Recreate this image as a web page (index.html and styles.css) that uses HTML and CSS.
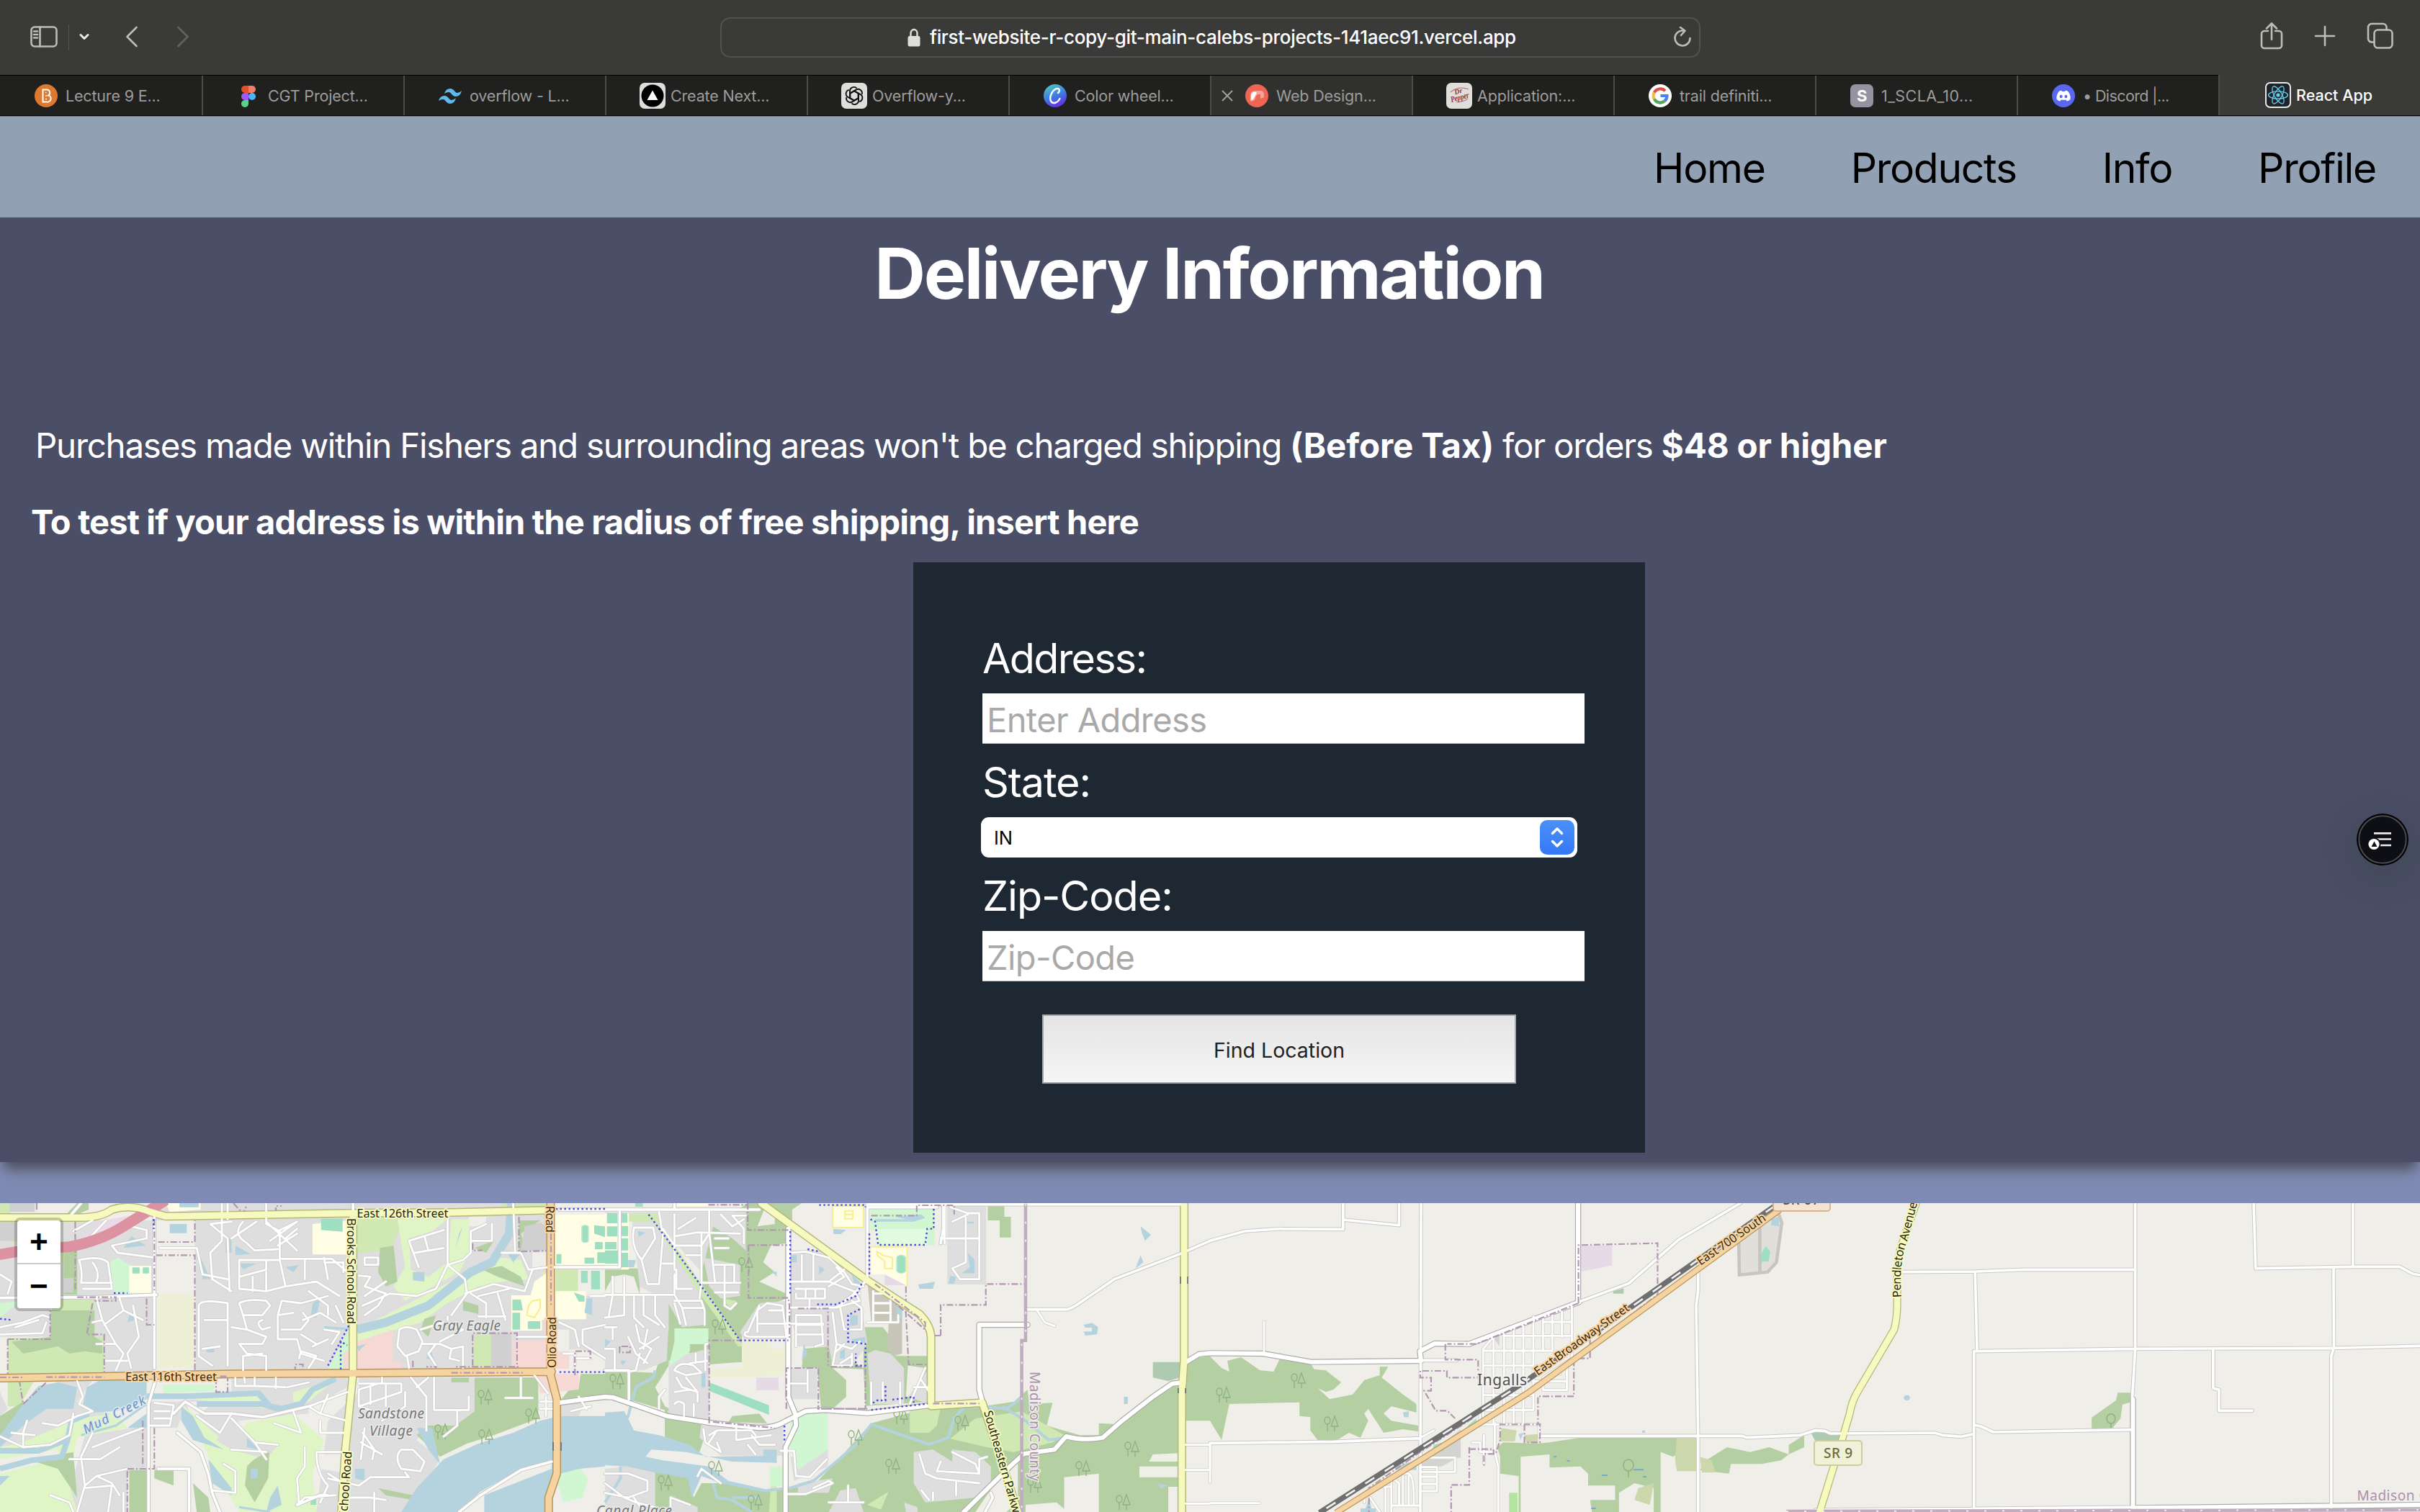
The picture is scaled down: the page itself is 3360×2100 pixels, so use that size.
FILE: index.html
```html
<!DOCTYPE html>
<html lang="en">
<head>
<meta charset="utf-8">
<title>React App</title>
<link rel="stylesheet" href="styles.css">
</head>
<body>
<header class="browser">
  <div class="toolbar">
    <div class="toolbar-left">
      <svg class="ico-sidebar" viewBox="0 0 38 30"><rect x="1.5" y="1.5" width="35" height="27" rx="4.5"/><path d="M13.5 1.5V28.5M5 7.500H10M5 12H10M5 16.500H10"/></svg>
      <span class="tool-sep"></span>
      <svg class="ico-down" viewBox="0 0 14 10"><path d="M2 2.500L7 7.500L12 2.500"/></svg>
      <svg class="ico-back" viewBox="0 0 18 30"><path d="M15.500 2L2.500 15L15.500 28"/></svg>
      <svg class="ico-fwd" viewBox="0 0 18 30"><path d="M2.500 2L15.500 15L2.500 28"/></svg>
    </div>
    <div class="address-bar">
      <div class="address">
        <svg class="ico-lock" viewBox="0 0 18 26"><path d="M4.500 12V7.500a4.500 5.500 0 0 1 9 0V12" fill="none" stroke="#dededc" stroke-width="2.400"/><rect x="0.500" y="11" width="17" height="14.500" rx="2.500" fill="#dededc"/></svg>
        <span>first-website-r-copy-git-main-calebs-projects-141aec91.vercel.app</span>
      </div>
      <svg class="ico-reload" viewBox="0 0 26 30"><path d="M14 5.500A10.500 10.500 0 1 0 23.500 16M10 1L16.500 5.700L11 12"/></svg>
    </div>
    <div class="toolbar-right">
      <svg width="32" height="40" viewBox="0 0 32 40"><path d="M11 13H6a4 4 0 0 0-4 4V33a4 4 0 0 0 4 4H26a4 4 0 0 0 4-4V17a4 4 0 0 0-4-4H21M16 25V3M9 9.500L16 2.500L23 9.500"/></svg>
      <svg width="30" height="30" viewBox="0 0 30 30"><path d="M15 2V28M2 15H28"/></svg>
      <svg width="38" height="38" viewBox="0 0 38 38"><rect x="10.500" y="10.500" width="25" height="25" rx="5"/><path d="M10.500 27.500H7a5 5 0 0 1-5-5V7a5 5 0 0 1 5-5H22.500a5 5 0 0 1 5 5V10.500"/></svg>
    </div>
  </div>
  <nav class="tabs">
    <div class="tab"><svg class="fav" viewBox="0 0 32 32"><circle cx="16" cy="16" r="16" fill="#dd7a30"/><path d="M11.500 7.500H16.500a4.300 4.300 0 0 1 2.600 8a4.500 4.500 0 0 1-2.200 9H11.500Z" fill="none" stroke="#fff" stroke-width="2"/><path d="M15 11.500H16.500M15 16H17M15 20.500H17" stroke="#fff" stroke-width="1.600"/></svg><span>Lecture 9 E...</span></div>
    <div class="tab"><svg class="fav" viewBox="0 0 32 32"><path d="M11 2H16V12H11a5 5 0 0 1 0-10Z" fill="#e5502a"/><path d="M16 2H21a5 5 0 0 1 0 10H16Z" fill="#f27b69"/><path d="M16 12V22H11a5 5 0 0 1 0-10Z" fill="#9b59f5"/><circle cx="21" cy="17" r="5" fill="#4eb4f5"/><path d="M11 22H16V27a5 5 0 1 1-5-5Z" fill="#5bd08a"/></svg><span>CGT Project...</span></div>
    <div class="tab"><svg class="fav" viewBox="0 0 32 32"><path d="M8 13Q10 6 16 6C22 6 22 12 26 12Q29 12 32 9Q30 17 24 17C18 17 18 11 14 11Q11 11 8 13ZM0 23Q2 16 8 16C14 16 14 22 18 22Q21 22 24 19Q22 27 16 27C10 27 10 21 6 21Q3 21 0 23Z" fill="#5cb9ee"/></svg><span>overflow - L...</span></div>
    <div class="tab"><svg class="fav-lg" viewBox="0 0 36 36"><rect width="36" height="36" rx="7" fill="#dededc"/><circle cx="18" cy="18" r="15.500" fill="#000"/><path d="M18 10.500L25.500 24H10.500Z" fill="#fff"/></svg><span>Create Next...</span></div>
    <div class="tab"><svg class="fav-lg" viewBox="0 0 36 36"><rect width="36" height="36" rx="7" fill="#dededc"/><g transform="translate(18 18)" fill="none" stroke="#111" stroke-width="1.900"><path id="petal" d="M-1.500 5.500L-6 3V-6.500a5.500 5.500 0 0 1 9.500-3.800M-6 3L1 7"/><use href="#petal" transform="rotate(60)"/><use href="#petal" transform="rotate(120)"/><use href="#petal" transform="rotate(180)"/><use href="#petal" transform="rotate(240)"/><use href="#petal" transform="rotate(300)"/></g></svg><span>Overflow-y...</span></div>
    <div class="tab"><svg class="fav" viewBox="0 0 32 32"><defs><linearGradient id="cv" x1="0.300" y1="0" x2="0.700" y2="1"><stop offset="0" stop-color="#4fc3c5"/><stop offset="0.500" stop-color="#3f7be0"/><stop offset="1" stop-color="#6a27e0"/></linearGradient></defs><circle cx="16" cy="16" r="16" fill="url(#cv)"/><path d="M20 12Q23 9.500 21.500 7Q18.500 4 13 9.500Q8 16.500 9.500 22Q11.500 27.500 17 25.500Q20.500 24 22.500 20" fill="none" stroke="#fff" stroke-width="2.400" stroke-linecap="round"/></svg><span>Color wheel...</span></div>
    <div class="tab hovered"><svg class="close" viewBox="0 0 16 16"><path d="M1 1L15 15M15 1L1 15"/></svg><svg class="fav" viewBox="0 0 32 32"><circle cx="16" cy="16" r="16" fill="#ee6553"/><path d="M7 24V15Q7 9 14 9H21Q27 9 26 18L21 20V15Q21 13 17 14.500Q14 16 13.500 21Q11 24 7 24Z" fill="#fff" fill-opacity="0.400"/><path d="M8 22V16Q8 10.500 14 10.500L16 12L11 21Z" fill="#fff"/></svg><span>Web Design...</span></div>
    <div class="tab"><svg class="fav-lg" viewBox="0 0 36 36"><rect width="36" height="36" rx="7" fill="#dededc"/><path d="M6 13Q17 4 31 9M30 22Q23 27 14 27" fill="none" stroke="#b47a80" stroke-width="1.200"/><g transform="rotate(-16 18 18)" fill="#9a3340" font-family="Liberation Serif, serif" font-style="italic" font-weight="700"><text x="13" y="15" font-size="10">Dr</text><text x="5" y="24" font-size="11.500" textLength="26" lengthAdjust="spacingAndGlyphs">Pepper</text></g></svg><span>Application:...</span></div>
    <div class="tab"><svg class="fav" viewBox="0 0 32 32"><circle cx="16" cy="16" r="16" fill="#fff"/><g fill="none" stroke-width="4.200"><path d="M23 9.200A9.500 9.500 0 0 0 7.800 11.500" stroke="#de4f43"/><path d="M7.800 11.500A9.500 9.500 0 0 0 7.800 20.500" stroke="#f2bc42"/><path d="M7.800 20.500A9.500 9.500 0 0 0 22.400 23.200" stroke="#55a65c"/><path d="M22.400 23.200Q25.500 20.500 25.500 16H16.500" stroke="#4a81ec"/></g></svg><span>trail definiti...</span></div>
    <div class="tab"><svg class="fav" viewBox="0 0 32 32"><rect width="32" height="32" rx="7" fill="#9494a0"/><text x="16" y="24" text-anchor="middle" font-family="Inter, sans-serif" font-weight="700" font-size="22" fill="#fff">S</text></svg><span class="wide">1_SCLA_10...</span></div>
    <div class="tab"><svg class="fav" viewBox="0 0 32 32"><circle cx="16" cy="16" r="16" fill="#5a67f0"/><path d="M9.500 10Q12 8.600 13.500 8.800L14 10H18L18.500 8.800Q20 8.600 22.500 10Q26.500 16 25.500 21Q22.500 23.500 20.500 23.500L19.500 21.700H12.500L11.500 23.500Q9.500 23.500 6.500 21Q5.500 16 9.500 10Z" fill="#fff"/><ellipse cx="12.600" cy="17" rx="2" ry="2.300" fill="#5a67f0"/><ellipse cx="19.400" cy="17" rx="2" ry="2.300" fill="#5a67f0"/></svg><span class="tight">• Discord |...</span></div>
    <div class="tab current"><svg class="fav-lg" viewBox="0 0 36 36"><rect x="1" y="1" width="34" height="34" rx="6" fill="#20232a" stroke="#e8e8e6" stroke-width="2"/><g fill="none" stroke="#66cfee" stroke-width="1.300"><ellipse cx="18" cy="18" rx="13.500" ry="5.200"/><ellipse cx="18" cy="18" rx="13.500" ry="5.200" transform="rotate(60 18 18)"/><ellipse cx="18" cy="18" rx="13.500" ry="5.200" transform="rotate(120 18 18)"/></g><circle cx="18" cy="18" r="2.600" fill="#66cfee"/></svg><span>React App</span></div>
  </nav>
</header>

<nav class="site-nav"><a>Home</a><a>Products</a><a>Info</a><a>Profile</a></nav>

<main class="delivery">
  <h1>Delivery Information</h1>
  <p class="policy">Purchases made within Fishers and surrounding areas won't be charged shipping <b>(Before Tax)</b> for orders <b>$48 or higher</b></p>
  <p class="prompt">To test if your address is within the radius of free shipping, insert here</p>
  <form class="lookup">
    <label class="address-label">Address:</label>
    <input type="text" placeholder="Enter Address">
    <label>State:</label>
    <div class="select"><span>IN</span><svg viewBox="0 0 48 48"><defs><linearGradient id="sel" x1="0" y1="0" x2="0" y2="1"><stop offset="0" stop-color="#4a90f8"/><stop offset="1" stop-color="#3478f6"/></linearGradient></defs><rect width="48" height="48" rx="10" fill="url(#sel)"/><path d="M17.500 18.500L24 12L30.500 18.500M17.500 29.500L24 36L30.500 29.500" fill="none" stroke="#fff" stroke-width="3.400" stroke-linecap="round" stroke-linejoin="round"/></svg></div>
    <label>Zip-Code:</label>
    <input type="text" placeholder="Zip-Code">
    <button type="button">Find Location</button>
  </form>
</main>

<section class="map">
<svg class="tiles" width="3360" height="429" viewBox="0 0 3360 429">
<defs>
<g id="trees" fill="none" stroke="#8fb080" stroke-width="1.300"><ellipse cx="-5" cy="-5" rx="4" ry="5"/><path d="M-5 0V10M5 -11L0 3H10ZM5 3V10"/></g>

<!-- residential streets -->
<g id="res0" transform="translate(0 -91) scale(0.535714 0.333333)">
<path d="M240 345L190 390M275 345L225 430M340 370L380 385V420L290 450L305 480L400 500M205 510Q215 560 210 605H290M205 510Q260 490 280 520L290 630H215M240 520Q260 560 250 600M0 570L30 600L20 650M0 790L60 770L110 740L130 750M0 820L110 815L120 770M40 790L100 760"/>
<path d="M250 670L265 760L240 770M265 760L300 860L320 900L300 970M310 670L320 720L370 760M345 700L360 830L330 900L340 960M270 930H330M250 860L300 860M320 720L270 780"/>
<path d="M575 273V430L545 480L550 590L600 640M590 273V340M600 350L545 360L590 420L595 640M415 460H510L525 570L590 590M515 700Q520 670 590 690V950M515 700V910L550 950M525 880L570 870M530 760H590"/>
<path d="M630 350Q600 400 640 440L660 470L720 465M665 350L600 420M690 350L770 470M720 390L770 350L700 430M770 400L720 450M740 420L770 380M690 273V360L725 390V505H860L900 560M725 490M620 510V630L690 640L740 620M620 510H725M690 510V550L620 580M725 510L740 620L820 600L880 660M790 510V590M840 500L850 590M655 580V640M690 560V640M840 520H890V560"/>
<path d="M620 690Q640 670 690 680L700 700L680 740L630 740ZM630 740L640 800L600 790M680 760Q660 770 680 800L700 790M640 800L690 830L680 860H620L640 900L690 910V970M720 840V740L730 680L780 690L850 660M720 740L760 730M720 840H770L780 900L840 930M630 970V910L680 900M785 760L830 730L870 770M785 730L800 760L780 800H730M870 700L890 770M800 640L850 700V740M820 860L780 820M850 840L810 870M840 800L880 810L860 860M775 920L780 890L820 910L800 960"/>
<path d="M630 970L635 1020M660 1000V1035L740 1040M715 1000V1045M610 1000V1035H660M745 1040L800 1020M945 500H980V530H945ZM930 575L960 580L945 620L1000 650L980 700L945 740M945 660L1000 600M940 700L1010 650L1080 660L1130 630L1160 530L1200 510L1220 480V390L1260 360M1160 340V530L1205 590L1210 650L1170 740M1060 430L1150 385M1060 430L1085 540M1075 480L1150 460M1100 410L1110 470M1220 430L1275 430V360M1205 650L1280 610L1360 640L1380 550M1220 650L1260 690V750M1290 650L1310 760M1330 273L1335 475M1300 480H1350L1370 550L1420 540M1240 660L1320 630M1240 745H1310"/>
<path d="M1035 800Q1050 780 1080 800L1095 850L1085 890L1050 910L1030 870ZM1055 910L1060 960M1095 860H1140L1170 880L1200 870V960M1130 860L1110 900L1130 950M1090 800L1150 770L1200 800L1140 850M1170 880L1165 920L1190 930M1160 760V745"/>
<path d="M990 1000V1020L930 1050V1120M930 1025H1040V1060L930 1120M1050 1060V1120L990 1180M1065 1000L1105 1080V1220M1125 1000V1135H1215V1080M1185 1140V1200L1150 1245M930 1120L1010 1160M960 1040V1110M1000 1030V1120M1080 1040L1110 1000M1350 1000V1080M1310 1085H1380M945 1210L935 1340M935 1270L990 1320M940 1230L970 1300L965 1340M1040 1300Q1020 1330 1040 1380L1090 1390L1100 1350L1070 1300ZM1050 1395L1060 1415H960L930 1450L850 1420M900 1500H960L1000 1510M970 1480V1560M1385 990L1420 1065M1400 1100H1430M1400 1130H1430M1415 1080V1160"/>
<path d="M1450 770L1490 800L1500 870M1568 780L1510 800V860L1568 920M1530 660H1568M1460 900H1490V950M1490 920H1530M1340 830H1420M1530 1120L1480 1140M1500 1080L1520 1130"/>
<path d="M600 1150L570 1230L510 1160M600 1170L660 1270L720 1280M600 1300L690 1310M660 1270L690 1340M800 1120L830 1150L900 1180M850 1070L830 1150M900 1060L800 1120M760 1140L780 1230L710 1190M830 1180V1230H900M820 1310H890M820 1310Q820 1400 850 1450L830 1520M790 1290V1370L770 1420L775 1530M870 1490L790 1500L770 1530M850 1400L890 1440M580 1360L610 1390V1480L550 1470"/>
<path d="M200 1015L215 1080L205 1110L240 1140L200 1160L150 1200L110 1190M0 1245L60 1290L130 1280L180 1240L190 1150M70 1180L60 1230V1290M30 1230L90 1240M400 1105L450 1115L440 1200H390M400 1140H440M400 1170H440M240 1230L210 1330L220 1450L200 1560M240 1290L320 1240L370 1210M180 1340L260 1340L310 1290M220 1450L250 1410L290 1440L310 1490M250 1410L330 1380M320 1480V1560M220 1460L290 1450L280 1560M130 1490L180 1520L190 1560"/>
</g>
<g id="res1" transform="translate(840 -91) scale(0.535714 0.333333)">
<path d="M75 375H125L130 420L95 510L110 610H140L150 410L140 310M75 375Q65 450 95 510M190 380L235 335M180 320V550H185V630H225M150 380L180 450H250L270 400M185 410L240 395L350 400M270 300V395L285 600M250 400V600L245 670M285 420H320M285 460H320M285 530H335V600M255 605H350M285 645H345M310 530V700L325 715L340 690M210 490H245M300 320L330 370L360 340M365 325H330L360 380V440M150 525H180"/>
<path d="M0 655H180M20 580V655L10 740M50 580V740L0 750M75 655V750L100 790M100 660V740L140 780M130 655V740L155 790M180 570V655L200 710H255M180 680H250L258 720V780M200 710L210 780M180 690L195 775M0 790H30M20 790V840M80 780L90 850L120 880L100 940M110 800L100 880M140 830L90 880M60 830L80 900L110 940M0 880H25V970M60 975L80 970L90 900"/>
<path d="M180 970Q190 930 230 950L250 980L210 990ZM265 930L220 940M235 900V940M185 1000L200 1040L240 1060M240 1100V1060L210 1000M180 1060L220 1050M180 1110Q190 1090 205 1110V1160M155 1050L140 1080V1130M270 860H260V970M230 1110V1160M365 810Q355 830 380 830H470M395 810V720L420 690L460 700M395 775H565M460 700L470 830M425 720H460M370 810L400 700M495 740H560L565 860L545 870M495 780H565M495 820H565M495 740V870"/>
<path d="M480 480L520 475L580 500L620 560L640 610L670 620M480 600H580L620 550M510 490V600M540 490V600M580 600L660 650M495 630H570V670H495M495 650V670M520 630V670M545 630V670M530 670V705M480 708H600L660 680L650 650L620 680M600 540L620 580L580 620M610 710L620 800H665V710L640 680M590 730L600 860L640 880L660 850M600 860L590 950H640V900M600 890L620 860M610 940L640 910M525 970V1060M470 1025H520M680 770H760V740M695 650H740V770M695 690H740M695 730H740M695 640V770M690 1020V1110M765 1020V1110M720 1020V1100M830 960L800 1070L790 1110M800 1040H840M820 1010L840 1060M540 600V540"/>
<path d="M255 1215L260 1270L300 1310M340 1200V1260L430 1240M290 1220H380L390 1240M270 1240L290 1220L270 1270M380 1240L400 1280H440M370 1280L390 1320M300 1310L290 1270M455 1305H490L495 1410L530 1415L575 1340M470 1485H520L590 1440L580 1430L540 1460M895 290L940 315H970V590H920L900 545L935 520V330M900 350L940 320M870 420H970M935 385V520M0 1400H60L110 1430V1470L60 1500L0 1480M75 1500L100 1560M0 1440L50 1500L80 1520L130 1540M170 1560V1500L220 1530"/>
<path d="M815 1320L830 1400L860 1420L970 1440M900 1310L960 1360L970 1400L860 1390L870 1350M970 1400V1340L990 1330M910 1435V1490M820 1470L840 1510M850 1480V1510M630 1450V1520M580 1520H670M240 1410L250 1380L300 1440M880 440V273M1120 720L1140 770L1165 785M1505 1280H1568V1385H1505M1505 1525H1568"/>
</g>
<g id="res2" transform="translate(1680 -91) scale(0.535714 0.333333)">
<path d="M708 880V1190M735 820V1190M762 800V1190M787 790V1190M812 770V1190M838 745V1130M863 740V890M887 730V890M912 715V830M938 690V940M863 768H938M760 826H938M708 888H887M708 950H838M708 1012H838M708 1073H838M708 1135H838M700 1195H855M708 880L740 820M938 920L863 1000V1052H925V935M838 1015H925M900 960L908 985M738 1190L738 1310L747 1370V1560M700 1195V1130M853 1195V1245M680 1270H700V1310H740M710 1240V1360M545 1333H635V1393H545M545 1373H588V1473H545M545 1413H588M545 1443H588M400 1520Q400 1460 430 1455M415 1500L440 1560M470 1430Q490 1395 515 1400Q530 1410 528 1530M470 1430V1560M455 1400L490 1440V1530M500 1410V1530M515 1410V1530M470 1533H540M430 1455H470M455 1455V1560M140 768V890M0 1523H128M0 1272V1435M545 1250L580 1220"/>
</g>

<!-- unclassified country roads -->
<g id="min0" transform="translate(0 -91) scale(0.535714 0.333333)">
<path d="M0 668L250 665L405 655M400 330V960M405 1000L385 1110V1560M210 273L180 330M915 273V335M1430 540H1568M1450 300H1568M480 1100L450 1150M480 1100L530 1150L600 1150L680 1165L800 1120M460 1230L520 1310L540 1400L550 1480L570 1560M770 1530L830 1490H850M410 1380H490V1560M1430 1350L1350 1385L1245 1490L1190 1560"/>
</g>
<g id="min1" transform="translate(840 -91) scale(0.535714 0.333333)">
<path d="M0 970H62V1090M180 273V295M38 310V540H0M680 273V590L640 660L600 708M685 290H860M877 273V380L870 440M1095 716H1198Q1210 710 1220 700L1320 590L1490 485L1568 430M985 1560L1005 1500L1000 1480M0 300H400M685 278H1500"/>
</g>
<g id="min2" transform="translate(1680 -91) scale(0.535714 0.333333)">
<path d="M0 430L90 390L180 380L345 382V273M345 342L490 365V273M547 273L545 1560M953 273V690M955 685L1085 608L1215 425L1375 273M1265 530V640L1260 700L1265 1240V1560M0 1273L320 1267L545 1253M545 928H640M855 1243H1380L1390 1250L1530 1240L1568 1220"/>
</g>
<g id="min3" transform="translate(2520 -91) scale(0.535714 0.333333)">
<path d="M0 1220L25 1222L40 1233L310 1230L330 1240L380 1246L410 1235M225 560L415 558L540 550H830M415 558L420 890M830 273V880L822 1090M415 890L830 880L1340 877L1568 868M412 890V1550M1137 273L1142 545L1400 538H1515L1550 568L1568 573M1394 273V538M1344 540L1345 875L1338 910V1540M1032 880V1045L1047 1050V1138H1133M412 1197L430 1203L462 1227L822 1217M0 1552L820 1540"/>
</g>

<!-- tertiary roads -->
<g id="ter" transform="translate(840 -91) scale(0.535714 0.333333)">
<path d="M-120 1105L-50 1090L0 1080L20 1082L160 1160L280 1190L400 1210Q440 1210 470 1180L520 1140L570 1135L680 1148L845 1115M475 380V1080L493 1150L495 1200L468 1290V1560M978 1100L970 1050V780H1095M1501 940L1540 902L1568 898L1705 900L1830 935L2115 930L2112 890L2150 858L2240 860L2525 685M1500 1020L1470 1025L1420 1080L1340 1180L1290 1250Q1240 1265 1195 1245L1165 1300L1085 1318L1050 1370L930 1560M2522 273V685M3960 1090V1550M3960 1543L4720 1530"/>
</g>
<!-- secondary roads -->
<g id="sec" transform="translate(0 -91) scale(0.535714 0.333333)">
<path d="M0 333H200Q260 335 290 300Q340 275 390 310L430 328L900 315L1170 312L1430 302M915 315V980L895 1300L885 1560"/>
</g>
<g id="sec1" transform="translate(840 -91) scale(0.535714 0.333333)">
<path d="M405 273L680 595L815 735Q843 780 845 830V1118L978 1105L1010 1260L1070 1560M1501 273V930L1495 1060V1560"/>
</g>
<g id="sec3" transform="translate(2520 -91) scale(0.535714 0.333333)">
<path d="M262 273L220 470L213 560V670Q214 750 205 800L110 1060Q95 1100 90 1150L68 1270L12 1560"/>
</g>
<g id="pri" transform="translate(0 -91) scale(0.535714 0.333333)">
<path d="M0 1002L270 995L600 985L900 982L1430 975M1427 273V990L1443 1090V1400L1422 1500V1560"/>
</g>
</defs>

<rect width="3360" height="429" fill="#f0eee8"/>

<!-- land use, west -->
<g transform="translate(0 -91) scale(0.535714 0.333333)">
<path class="town" d="M0 345H400V830H270L130 700H0ZM405 273H1430V975H600L505 970V345H405ZM0 700H130V830H0ZM245 670H400V980H270V830H245ZM1440 757L1520 757V660H1568V920L1500 880L1440 890ZM600 1000H900V1040L800 1130L600 1110ZM930 1000H1230V1140L1180 1200H1110L1080 1260L1140 1340L1060 1560H820L850 1180L930 1060ZM150 1010H240L200 1100L300 1160L260 1200L130 1250L60 1320L0 1300V1240L110 1120ZM220 1240L385 1200V1400L330 1400V1560H200L180 1480ZM0 1060L20 1130L0 1160ZM390 1100H480L460 1210H390ZM460 1100L540 1080L800 1120V1150L620 1180L580 1290L460 1170ZM1440 1090H1520L1500 1160H1440ZM0 1500L100 1470L130 1560H0Z"/>
<path class="land" d="M410 345H505V435H410ZM405 490H507V970H405ZM95 273H380V310H95ZM1215 330H1260V370H1215ZM1380 478H1420V540L1380 550ZM1445 800H1475V960H1440ZM500 1170L560 1100H480ZM410 1210L460 1210L530 1310L520 1390H420ZM390 1390H500V1560H390ZM830 1320H900V1400L830 1380ZM1190 1560L1245 1480L1350 1380L1430 1340V1360L1350 1400L1250 1490V1560ZM1420 1560V1500L1510 1500L1525 1425L1568 1370V1560Z"/>
<path fill="#edf0d5" d="M410 655H503V957H410Z"/>
<path class="grass" d="M0 273H27V345H0ZM0 430H195V520H60V440ZM135 675H245V830H270V1010H20V835H135ZM925 335H1050L1010 470L925 480ZM1230 820H1273V955H1225ZM1300 1000H1380V1080H1300ZM1440 548H1498V648H1440ZM1300 273H1430V290H1300ZM20 1010H90L50 1120H20Z"/>
<path class="golf" d="M1030 340H1160L1120 390L1060 420L1065 550L1110 580L1160 520L1170 340H1215L1220 470L1190 560L1100 640L1050 680L1020 620L1050 540ZM1240 540L1300 500L1350 510L1370 590L1300 600L1240 620L1150 700L1090 770L925 850V800L1060 690L1180 590ZM470 1110L500 1150L590 1280L640 1190L760 1150L840 1260L810 1400L820 1560H620L560 1400L530 1290ZM60 1270L200 1170L300 1150L330 1210L200 1250L190 1340L180 1450L200 1560H0V1400L150 1340V1300L0 1340V1290ZM450 1080L660 1070L700 1130L600 1110ZM760 1060L870 1010L800 1100L760 1100Z"/>
<path class="town" d="M600 1180L650 1260L720 1280L690 1340L600 1300L560 1260Z"/>
<path class="wood" d="M200 273H230V300L185 330H165ZM165 440L200 430V655H165ZM130 720H245V830L265 850V900L220 890L180 900L150 870L60 900L30 850L130 830ZM985 460L1020 450L1030 600L1000 620L980 560ZM1230 1000H1395V1170L1280 1240L1210 1275L1140 1330L1080 1240L1110 1200H1180L1230 1140ZM1505 985H1568V1080L1450 1100L1480 1040H1500ZM1345 345H1400L1350 400L1365 475H1345ZM1250 550L1300 535L1350 580L1360 620L1290 580ZM1170 1000H1215V1020H1170ZM1200 680L1240 700V735L1200 720ZM640 1370Q660 1330 698 1312L695 1420L660 1520L635 1450ZM980 1460L1070 1490V1510L1000 1490ZM335 1385H390V1560H335ZM400 1385H450V1450L400 1420ZM80 1345L190 1310L200 1500L150 1380ZM500 1440L540 1500L545 1560H510ZM0 1160L60 1100L80 1110L20 1240L0 1250ZM1100 755L1130 740L1110 830L1090 800ZM1230 460L1280 430L1260 480Z"/>
<path class="park" d="M285 520L305 500L340 535V650H295ZM0 690L55 680L0 750ZM420 1030H555V1055L425 1065ZM850 965L905 790V965ZM1440 1410L1500 1370L1524 1420L1510 1500L1460 1520Z"/>
<path class="school" d="M335 535H392V647H335ZM810 360L905 345V487H810ZM1438 320H1568V530H1438ZM1440 640H1518V757H1440ZM1325 657L1375 657L1385 600L1420 560V760H1405V805H1325ZM430 273H520V300L440 310ZM945 892H970V920H945Z"/>
<path class="pitch" d="M343 541H362V566H343ZM370 541H386V566H370ZM832 338H888V392L832 385ZM1506 555H1523V605H1506ZM1532 555H1555V632H1532ZM1328 675L1350 675L1355 720L1328 720ZM1328 730H1348V800H1328ZM1540 365L1568 370V415L1540 400ZM1542 435H1562V465H1542ZM1515 500H1540V525H1515ZM1442 485H1455V525H1442ZM1487 645L1515 660V683H1500ZM1368 765H1400V797H1368ZM1548 478H1568V523H1548ZM805 1500H820V1530H805Z"/>
<rect x="1508" y="365" width="17" height="72" rx="8" class="track"/>
<path class="pink" d="M925 850L1018 800V935H1040V963H890V900ZM1330 845H1410V750H1440V890H1475V963H1330ZM1390 985H1500V1050L1400 1065Z"/>
<path fill="#ead9e8" d="M205 420L270 345L390 310L310 410L240 440Z"/>
<path class="gray" d="M0 345H45V430H0ZM1273 815H1325V955H1273ZM1360 370L1400 355L1430 380V470H1350ZM165 585H190V645H165ZM25 273H90V310H25Z"/>
<path class="water" d="M440 360H484V398H440ZM320 460L340 410L378 450ZM610 450L650 485L610 490ZM620 525H665L630 550ZM1070 560H1100V600L1070 595ZM100 1035L150 1020L200 1040L190 1130L120 1130L60 1200L0 1290V1240L60 1110ZM225 1040L260 1010H380V1090L300 1140L240 1145L215 1110ZM1040 1560L1080 1460L1150 1340L1240 1275L1330 1230L1400 1180L1450 1160H1568V1370L1500 1380L1430 1410V1560H1255V1490L1430 1380V1345L1350 1380L1245 1475L1190 1560ZM470 1120L500 1160L530 1250L580 1300L500 1260L470 1180ZM1190 400L1200 370L1180 460ZM0 1410L25 1410L0 1450ZM720 1450L730 1530L690 1560L700 1500ZM330 1210L380 1150V1210ZM640 1250L670 1300L640 1290ZM810 690L830 670L820 750H805ZM1115 870L1125 930L1105 920ZM920 1380H945V1430L920 1420ZM925 870L948 860L930 890ZM1310 470L1350 480L1330 520ZM585 420H600V480H585ZM535 870H555V895H535ZM335 740L350 735V760L330 770ZM650 1380H668V1420H650ZM1520 670H1535V740L1515 730ZM740 540L775 530L760 560ZM520 500L545 590H525ZM1080 1210H1120L1140 1360L1110 1300ZM540 1340L600 1460V1490L550 1440ZM465 273H515V290H465Z"/>
<path class="river" stroke-width="12" d="M1325 273L1320 400L1275 520L1220 560L1180 610L1110 700L1000 770L925 800"/>
<path class="river" stroke-width="8" d="M0 1380L80 1345L160 1330L175 1260L185 1180L230 1150M380 1078H480L670 1065L700 1120L730 1130L780 1110L810 1050L870 1005M510 1110L600 1110L680 1110L720 1130M0 1305H100L170 1260"/>
<path class="river" stroke-width="3" d="M380 1110L300 1200L210 1240M840 790L925 800M620 1540L700 1560"/>
<path fill="none" stroke="#f7ee8f" stroke-width="2" d="M1380 680L1400 675V710L1385 750L1365 740L1370 700ZM1405 565H1418V585"/>
</g>

<!-- land use, centre -->
<g transform="translate(840 -91) scale(0.535714 0.333333)">
<path class="town" d="M0 310H370V345H0Z"/>
<path class="wood" d="M370 273H510L485 300V360L475 480L470 670L400 720L355 800L355 935L275 950L200 880L165 950L150 990L130 1040L165 1150L270 1190L245 1310L195 1290L155 1230L165 1140L60 1090L0 1070V975H60L130 980L165 800L160 655H250V560L280 370ZM0 545H90V655L75 580L50 570L20 580L0 640ZM515 880L580 870L670 960V790L720 790L745 840L750 910L840 910V960L850 1100L560 1130L550 960H510ZM430 1470L540 1450L600 1350L690 1190L850 1120L980 1120L1060 1100L1095 1050L1100 1110L1160 1105L1145 1200L1230 1240L1280 1240V1190L1335 1195L1400 1110L1500 1010L1568 950V1180L1500 1180V1560H430ZM992 285H1035V330H1052V416H1023V345H992ZM155 1120L230 1180V1290L155 1255ZM1500 925L1568 910V1180L1500 1180ZM0 1370L130 1370L330 1440L430 1475V1560H130L120 1420L30 1380Z"/>
<path class="land" d="M415 290H440V360L395 370ZM470 440L430 450L410 520L440 560L400 600L470 650ZM590 960L670 965L675 1130L590 1130L625 1080V1010ZM390 1130H360L385 1180L350 1140ZM590 1300L570 1290L575 1230L680 1150L650 1250ZM1220 1410L1280 1400V1560H1190V1415ZM1385 1370H1487V1415L1385 1415ZM1420 1320L1487 1315V1350H1410ZM1505 1250H1568V1560H1505ZM1460 1455H1500V1560H1460ZM960 1560L1020 1420L1070 1350V1520L1040 1560ZM0 1365H45L20 1420H0ZM215 1410L260 1400L310 1440L250 1440L230 1500ZM785 950L830 960L800 1080H780ZM1090 1530L1170 1520L1200 1560H1090ZM1510 1180L1540 1185L1568 1230H1510Z"/>
<path class="town" d="M0 657H165V780L160 930L100 970H0ZM70 345L120 340L160 420L250 620V700L260 780L200 790L160 680L90 620ZM150 310H365V470L330 420L280 370L250 560L200 470L150 370ZM255 500L350 530V660L300 670L270 620ZM475 470L560 470L660 580L665 700L680 860L640 950H590L580 870H500L475 700ZM680 900L700 885L740 900L775 960V1110H690ZM887 285H988V612H887ZM165 930L215 900L270 880V1180L165 1160ZM250 1190H462V1325L300 1325L245 1250ZM480 1330L578 1300V1370L490 1430ZM800 1310L850 1300L900 1350L900 1300L960 1310L1000 1370V1440L960 1500L830 1520L800 1440ZM0 1380L60 1370L130 1395V1560H0ZM475 960H550V1090H475ZM610 1470L650 1460L670 1560H580ZM775 1520L810 1540V1560H780ZM170 1490L240 1540V1560H175ZM500 1440L590 1420L580 1480H500ZM350 810L400 690L470 680V840H360ZM785 1080L840 960V1110Z"/>
<path class="grass" d="M60 315H130L160 400L250 610L360 870H345L240 640L125 350H60ZM790 1130L870 1125L860 1200L840 1230L790 1230ZM895 1255L960 1170L1080 1140L1190 1240L1160 1270L1060 1310L990 1290ZM305 670L340 680L325 715ZM680 1530L735 1475L715 1550ZM430 1450H445V1560H425Z"/>
<path class="park" d="M180 795H268V860H220V890L165 955L180 850ZM688 290H855V450H705V385H688ZM482 1150H578V1300L500 1385L480 1290ZM427 1370H465V1450L427 1455ZM750 570H778V590H750Z"/>
<path fill="#e1fbe1" d="M705 380H835V448H705Z"/>
<path fill="#edf0d5" d="M355 850H430V880H465V990L370 1000H272V965L355 940Z"/>
<path class="land" d="M272 945L355 935V960L272 965ZM272 1000H465V1110L430 1190H280L272 1060Z"/>
<path class="wood" d="M330 1160L400 1150L420 1190L320 1185Z"/>
<path fill="#e7dae7" d="M392 1000H450V1052H392ZM725 570H778V615H725Z"/>
<path class="school" d="M0 315H62V550H0ZM590 285H670V375H590ZM690 455H783V618L725 570H690ZM182 273H268V285H182Z"/>
<path class="pitch" d="M5 315H32V357H5ZM5 370H32V412H5ZM0 470H35V525H0ZM42 315H58V355H42ZM42 368H60V410H42ZM42 420H60V470H42ZM42 480H60V540H42ZM0 435H30V465H0ZM270 1020L425 1115V1155L270 1055ZM78 273H98V288H78Z"/>
<rect x="756" y="490" width="23" height="75" rx="11" class="track"/>
<path fill="none" stroke="#f7ee8f" stroke-width="2" d="M705 475L720 490L745 500V545H725V515L705 490ZM690 455H783V618M590 285H670V375H590ZM622 305H642V338H622ZM622 320H642"/>
<path fill="#c8c6b8" d="M680 600L740 640L770 720V900L750 910L732 880L735 770H690Z"/>
<path fill="#aecbb2" d="M1420 935H1490V1000L1460 1015L1420 1000Z"/>
<path class="water" d="M0 1145L50 1140L75 1220L140 1240L220 1280L260 1330L445 1325V1355L330 1350L210 1310L120 1300L105 1330L150 1345L270 1370L320 1430L430 1470L420 1480L300 1440L250 1410L225 1500L215 1420L130 1395L60 1370L0 1365ZM840 605L855 600L850 630H815L812 612ZM592 380L625 385L610 402H592ZM700 340H780L750 330L820 320L830 335L800 350H700ZM895 575L910 580L905 608H890ZM940 480L958 510V565L925 565L945 540ZM930 350H955V358H930ZM635 740H655V780L635 785ZM640 840L675 830V855H640ZM410 1300L445 1300V1325L410 1325ZM1388 370L1415 405L1400 430L1392 400ZM1388 490L1395 520L1375 545ZM1240 780L1262 772L1278 790L1275 820L1245 825L1240 808L1262 808V792H1245ZM1345 1080H1355V1110H1345ZM755 700L770 720V760L755 740ZM555 535L570 550L555 570ZM485 490L497 490V520H482ZM85 390L105 395L88 415ZM430 555L445 560V580ZM610 890L622 880V920H608ZM60 510H80L75 540H60ZM250 980H260V1040H250ZM515 860L525 900L510 930ZM640 570L665 610H645ZM0 840L15 850L0 875ZM40 930L55 930L45 950ZM1430 1440L1460 1450L1440 1460Z"/>
<path class="river" stroke-width="4" d="M420 1470L480 1460L540 1430L600 1350L650 1280L690 1195L840 1278L890 1250L905 1170L930 1125L980 1120L1040 1130L1085 1080M1030 1120L1090 1180L1150 1260L1190 1250M130 970L125 1000L80 1040L60 1160L50 1190M280 1440L290 1500L330 1510L380 1560M40 1370V1420L0 1520M330 1500L400 1500"/>
</g>

<!-- land use, east -->
<g transform="translate(1680 -91) scale(0.535714 0.333333)">
<path class="wood" d="M0 912L30 960L50 975L45 930L80 915L130 970L165 975L180 925L260 940L270 965L300 970L340 1020L320 1050L300 1060L280 1045L310 1090L370 1070L400 1010L440 990L440 955H462L445 1000L500 1070L535 1110V1145L470 1120L450 1150L470 1180L540 1200V1225L500 1215L450 1230L430 1180L410 1130L400 1150L410 1180L390 1250L360 1230L335 1255L325 1262H280L260 1220V1165L232 1160V1103L50 1110L30 1260L0 1180ZM760 1270L850 1275L880 1270L960 1250H1210L1230 1300L1200 1330L1168 1310V1560H1150L1150 1460L1100 1440L1060 1480L1060 1560H990L985 1510H1050V1450L980 1450V1400L960 1370L880 1375V1320L805 1330V1560H800V1410L752 1400V1330L745 1290ZM1290 1340L1340 1290L1400 1310L1450 1290L1500 1320L1480 1345L1430 1360H1350L1345 1400L1270 1385ZM1500 1280L1540 1240V1290L1500 1320ZM755 1360L795 1345L780 1390H755Z"/>
<path fill="#ccd8ac" d="M755 1210L795 1220L790 1265H750ZM815 1240L850 1235V1275L820 1270ZM1110 1460L1150 1440L1140 1530L1100 1510ZM1210 1250H1260V1390H1210L1205 1340ZM1270 1330L1300 1345L1310 1395H1275Z"/>
<path fill="#aecbb2" d="M1045 640L1072 628V650H1045Z"/>
<path fill="#b4e3a2" d="M775 1480H797V1560H775Z"/>
<path fill="#d3d3d1" d="M650 1215V1335L620 1330H560ZM545 1340H635L600 1370H545ZM750 810V870L738 840Z"/>
<path fill="#e7dae7" d="M962 450H1042V533L962 558Z"/>
<path class="water" d="M500 1145L515 1140V1165H503ZM480 1370L535 1345V1385H480ZM400 1560L413 1500L420 1560ZM800 1235L812 1230L805 1260ZM390 1545H430V1560H390ZM1120 1220H1128V1230H1120Z"/>
<path fill="none" stroke="#76a9cf" stroke-width="2" d="M1098 1384H1124M1015 1407H1030M1122 1413H1131M988 1545H1000M890 1330H898M925 1347H932"/>
<path fill="#e0dfda" d="M1372 400L1470 310L1482 355L1470 520L1445 560L1370 572Z"/>
<path class="water" d="M1455 340L1475 330V370L1455 365Z"/>
<path class="pitch" d="M690 1170V1200L665 1205ZM580 1280L605 1270V1308H575ZM1440 452L1452 475L1448 515L1427 518V490Z"/>
<path fill="none" stroke="#c6c5bf" stroke-width="4.500" d="M1370 410L1372 572L1445 560L1468 520L1482 355L1472 310M1425 370V560"/>
</g>
<g transform="translate(2520 -91) scale(0.535714 0.333333)">
<path class="wood" d="M785 1063H820V1102L797 1112L792 1170L770 1212H717V1167L780 1095Z"/>
<path fill="#aecbb2" d="M-12 1225L25 1225L65 1240L60 1262H0Z"/>
<ellipse cx="238" cy="1084" rx="8" ry="11" fill="#b4d3df"/>
<ellipse cx="767" cy="1171" rx="11" ry="20" fill="none" stroke="#8fb080" stroke-width="1.500"/><path d="M767 1191V1212" stroke="#8fb080" stroke-width="1.500"/>
</g>

<g><use href="#trees" x="673" y="270"/><use href="#trees" x="739" y="296"/><use href="#trees" x="613" y="318"/><use href="#trees" x="674" y="325"/><use href="#trees" x="1035" y="86"/><use href="#trees" x="998" y="172"/><use href="#trees" x="856" y="248"/><use href="#trees" x="1250" y="297"/><use href="#trees" x="1239" y="366"/><use href="#trees" x="993" y="369"/><use href="#trees" x="923" y="389"/><use href="#trees" x="1048" y="416"/><use href="#trees" x="1571" y="342"/><use href="#trees" x="1503" y="369"/><use href="#trees" x="1559" y="416"/><use href="#trees" x="1436" y="392"/><use href="#trees" x="1187" y="326"/><use href="#trees" x="1335" y="306"/><use href="#trees" x="1802" y="247"/><use href="#trees" x="1698" y="267"/><use href="#trees" x="1848" y="307"/><ellipse cx="2261" cy="364" rx="7" ry="8" fill="none" stroke="#8fb080" stroke-width="1.500"/><path d="M2261 372V381" stroke="#8fb080" stroke-width="1.500"/></g>

<g class="c-res"><use href="#res0"/><use href="#res1"/><use href="#res2"/></g>
<g class="c-min"><use href="#min0"/><use href="#min1"/><use href="#min2"/><use href="#min3"/></g>
<g class="c-ter"><use href="#ter"/></g>
<g class="c-sec"><use href="#sec"/><use href="#sec1"/></g><g class="c-sec thin"><use href="#sec3"/></g>
<g class="c-pri"><use href="#pri"/></g>
<g class="f-res"><use href="#res0"/><use href="#res1"/><use href="#res2"/></g>
<g class="f-min"><use href="#min0"/><use href="#min1"/><use href="#min2"/><use href="#min3"/></g>
<g class="f-ter"><use href="#ter"/></g>

<!-- boundaries and trails -->
<g class="boundary">
<g transform="translate(0 -91) scale(0.535714 0.333333)"><path d="M95 273V310M410 435H505V345M405 490H505V975M20 840H130V700M20 840V1010M240 690L225 820H270V980M50 1010L60 1110L120 1020M200 665H300V680H245M380 670V780H400M1225 950V815H1340V970H1180V955H1350M1345 330V475L1430 470M560 1000V1060H590V1000M330 1390V1560M400 1210V1380H330M370 1180V1370M765 980V945H785V980M1070 930V980H1130V955H1105M1490 990V890H1530V930M195 350V640M605 273L630 318L640 280M715 318V285H730M1220 310H1345M400 340V640M1225 440V470H1250"/></g>
<g transform="translate(840 -91) scale(0.535714 0.333333)"><path d="M370 273V385H475M372 448H472M372 448V668H475L478 700V840M270 1190V845H355M470 1130V960H553V1130M585 955H675V1130L550 1130M500 712H578V950M780 620V740L787 945H845M870 825H855M870 825V697H987V610H1090M690 325H808V282H905V320M38 870V895H65V870H38M280 1185L440 1210M690 600L850 830V1110H970M560 1130H680M268 280H370"/></g>
<g transform="translate(1680 -91) scale(0.535714 0.333333)"><path d="M955 690V448L1160 440V655L1065 770M985 840V920H943V1078H850V1195M815 1195V1270H855V1195H752V1260L740 1318H710V1370M672 1290V1447H625V1560M610 860V925H695V1000H614V972H545V1000H573V1055H555L585 1138H615L635 1170M672 1298H735V1315M955 690L690 860H615M680 1170L545 1310L412 1460V1560"/></g>
</g>
<g class="county"><g transform="translate(840 -91) scale(0.535714 0.333333)"><path d="M1090 275V845H1080V1560"/></g><path d="M2480 428L3360 426"/></g>
<g class="county-dash"><g transform="translate(840 -91) scale(0.535714 0.333333)"><path d="M1090 275V845H1080V1560"/></g><path d="M2480 428L3360 426"/></g>
<g class="trail">
<g transform="translate(0 -91) scale(0.535714 0.333333)"><path d="M850 950L905 780M883 965V850L900 865M295 648H330M398 340V380M1450 977H1568M1440 297H1568M0 755L30 760M897 1260V1275"/></g>
<g transform="translate(840 -91) scale(0.535714 0.333333)"><path d="M113 320L180 465L250 620L350 845H475M555 281H675V290M688 340L700 350L708 447H830L835 380H852V290M480 390V650M525 465L555 475M685 400V570M665 610L650 660L600 695H550M660 715L630 740V850L675 860V950H650V900M690 1135L840 1108M465 1200V1270M727 1035V1095H705L690 1110M745 1092L800 1080V1105"/></g>
</g>

<g class="motorway"><g transform="translate(0 -91) scale(0.535714 0.333333)"><path d="M-10 490L80 465L180 455Q260 430 320 370L430 260"/></g></g>
<g class="f-sec"><use href="#sec"/><use href="#sec1"/></g><g class="f-sec thin"><use href="#sec3"/></g>
<g class="f-pri"><use href="#pri"/></g>
<g class="boundary"><g transform="translate(0 -91) scale(0.535714 0.333333)"><path d="M0 999H60M120 998H270M570 995H590M1170 980H1360M1428 400V700"/></g><g transform="translate(840 -91) scale(0.535714 0.333333)"><path d="M700 610L830 770V800M850 1108H970"/></g></g>
<path d="M768 332V344M779 332V344M1639 102V112M1649 102V112M1636 257V264M1646 257V264" stroke="#666" stroke-width="1.500" fill="none"/>

<!-- rail line with the state road beside it -->
<path d="M2471 9L2124 262L1855 430" fill="none" stroke="#b9955b" stroke-width="9"/>
<path d="M2471 9L2124 262L1855 430" fill="none" stroke="#f6d4a2" stroke-width="6.500"/>
<path d="M2464 4L2116 249L1832 430" fill="none" stroke="#6f6f6f" stroke-width="7.500"/>
<path d="M2464 4L2116 249L1832 430" fill="none" stroke="#f1f1f1" stroke-width="2.600" stroke-dasharray="15 17"/>

<!-- labels -->
<defs><path id="pendleton" d="M2640 131Q2636 80 2649 50L2663 -4"/></defs>
<g class="halo-y">
<text x="495.500" y="20" textLength="127">East 126th Street</text>
<text transform="translate(482 21) rotate(90)" textLength="147">Brooks School Road</text>
<text transform="translate(482 437) rotate(-86)" textLength="92">School Road</text>
<text transform="translate(1366 290) rotate(74)" textLength="147">Southeastern Parkw</text>
<text><textPath href="#pendleton" textLength="134">Pendleton Avenue</textPath></text>
</g>
<g class="halo-o">
<text x="174" y="247" textLength="127">East 116th Street</text>
<text transform="translate(772 229) rotate(-90)" textLength="71">Olio Road</text>
<text transform="translate(758 4) rotate(90)" textLength="37">Road</text>
<text transform="translate(2135 240) rotate(-35.600)" textLength="158">East Broadway Street</text>
<text transform="translate(2361 87) rotate(-34.800)" textLength="112">East 700 South</text>
</g>
<g class="place">
<text x="601" y="177" textLength="94">Gray Eagle</text>
<text x="497" y="299" textLength="92">Sandstone</text>
<text x="513" y="323" textLength="60">Village</text>
<text x="828" y="434" textLength="105">Canal Place</text>
</g>
<text class="creek" transform="translate(119 321) rotate(-27)" textLength="95">Mud Creek</text>
<text class="city" x="2051" y="253" textLength="69">Ingalls</text>
<text class="county-name" transform="translate(1430 234) rotate(90)" textLength="152">Madison County</text>
<text class="county-name" x="3272.500" y="413" textLength="152">Madison County</text>
<g class="shield"><rect x="2519" y="330" width="66" height="34" rx="4" fill="#eff1d9" stroke="#c9cf9c" stroke-width="2"/><text x="2552" y="354" text-anchor="middle" fill="#686c3c" textLength="40">SR 9</text>
<rect x="2462" y="-23" width="79" height="34" rx="4" fill="#f6e4d2" stroke="#d9b48f" stroke-width="2"/><text x="2501" y="2" text-anchor="middle" fill="#6a4c28" textLength="51">SR 67</text></g>
</svg>
<div class="zoom"><a>+</a><a>−</a></div>
</section>

<div class="comment-fab"><svg viewBox="0 0 72 72"><circle cx="36" cy="36" r="36" fill="#000"/><circle cx="36" cy="36" r="32.800" fill="#0e0f14" stroke="#4a4a4c" stroke-width="2"/><path d="M24 27.300H48M24 35.500H48M24 44H48" stroke="#ececec" stroke-width="2.700"/><circle cx="24" cy="42.500" r="9.500" fill="#0e0f14"/><circle cx="24" cy="42.500" r="7.600" fill="#fff"/><path d="M24.500 38.500L28.500 46H20.500Z" fill="#111"/></svg></div>
</body>
</html>
```

FILE: styles.css
```css
* { box-sizing: border-box; }
body {
  margin: 0;
  width: 3360px;
  height: 2100px;
  overflow: hidden;
  position: relative;
  background: #808bb5;
  font-family: Inter, "Open Sans", sans-serif;
}

/* browser chrome */
.browser { height: 162px; background: #3a3a38; border-bottom: 1px solid #6d7580; }
.toolbar { display: flex; justify-content: space-between; height: 104px; padding: 24px 36px 0 42px; }
.toolbar svg { fill: none; stroke: #bcbcba; stroke-width: 2.6; stroke-linecap: round; stroke-linejoin: round; flex: none; }
.toolbar-left, .toolbar-right { display: flex; align-items: center; height: 54px; width: 695px; }
.toolbar-right { width: 700px; justify-content: flex-end; gap: 43px; height: 52px; }
.ico-sidebar { width: 38px; height: 30px; }
.tool-sep { width: 1px; height: 36px; margin: 2px 14px 0 15px; background: #525250; }
.toolbar .ico-down { width: 14px; height: 10px; stroke: #e8e8e6; stroke-width: 3; }
.ico-back { width: 18px; height: 30px; margin-left: 50px; }
.toolbar .ico-fwd { width: 18px; height: 30px; margin-left: 53px; stroke: #636361; }
.address-bar { display: flex; align-items: center; width: 1361px; height: 56px; padding: 0 10px 0 258px; border: 2px solid #51514f; border-radius: 14px; }
.address { display: flex; align-items: center; gap: 13px; flex: 1; color: #fff; font-size: 26px; font-weight: 500; letter-spacing: -0.31px; white-space: nowrap; line-height: 50px; }
.address .ico-lock { width: 18px; height: 26px; stroke: none; }
.ico-reload { width: 26px; height: 30px; }

.tabs { display: flex; height: 57px; border-top: 1px solid #000; border-bottom: 1px solid #000; }
.tab { display: flex; align-items: center; gap: 11px; width: 280px; padding: 0 0 0 47px; background: #20201e; color: #9d9d9b; font-size: 21.5px; letter-spacing: -0.17px; white-space: nowrap; border-left: 2px solid #4b4b49; }
.tab:first-child { border-left: 0; padding-left: 48px; }
.tab span { line-height: 30px; }
.tab .wide { letter-spacing: 0.4px; }
.tab .tight { letter-spacing: -0.6px; }
.tab .fav { width: 32px; height: 32px; flex: none; }
.tab .fav-lg { width: 36px; height: 36px; margin: 0 -4px 0 -1px; flex: none; }
.tab .close { width: 16px; height: 16px; margin: 0 6px 0 -33px; fill: none; stroke: #9d9d9b; stroke-width: 2; }
.tab.hovered { background: #30302f; }
.tab.current { background: #3a3a38; color: #fff; font-weight: 500; padding-left: 64px; margin-top: -1px; height: 56px; letter-spacing: 0; }

/* site */
.site-nav { display: flex; justify-content: flex-end; gap: 119px; height: 140px; padding: 2px 61px 0 0; background: #91a0b3; color: #000; font-size: 57px; letter-spacing: -1.3px; line-height: 140px; }
.delivery { height: 1312px; background: #4a4e67; color: #fff; box-shadow: 0 15px 16px -6px #4c4f60, 0 24px 24px -10px rgba(120, 115, 130, 0.4); position: relative; }
h1 { margin: 0; padding-right: 2px; text-align: center; font-size: 98px; font-weight: 700; letter-spacing: -2.4px; line-height: 156px; padding-bottom: 1px; }
.policy { margin: 130px 0 0 49px; font-size: 47.5px; line-height: 60px; letter-spacing: -1.26px; white-space: nowrap; }
.policy b { letter-spacing: -0.15px; font-weight: 700; }
.prompt { margin: 46px 0 0 43px; font-size: 47px; line-height: 60px; font-weight: 700; letter-spacing: -0.84px; white-space: nowrap; }
.lookup { display: flex; flex-direction: column; width: 1016px; height: 820px; margin: 26px 0 0 1268px; padding: 98px 84px 0 96px; background: #1e2833; }
.lookup label { font-size: 57.5px; line-height: 70px; letter-spacing: -1.1px; }
.lookup .address-label { letter-spacing: -1.8px; }
.lookup input { width: 836px; height: 70px; margin: 14px 0 18px; padding: 3px 5px 0 6px; border: 0; border-bottom: 1px solid #c4c4c4; border-radius: 0; background: #fff; font: 47px Inter, sans-serif; letter-spacing: -0.6px; }
.lookup input::placeholder { color: #a9a9a9; opacity: 1; }
.select { display: flex; align-items: center; justify-content: space-between; width: 828px; height: 56px; margin: 14px 0 18px -2px; padding: 0 4px 0 18px; border-radius: 11px; background: #fff; color: #000; font-size: 25.5px; }
.select svg { width: 48px; height: 48px; }
.lookup button { width: 658px; height: 96px; margin: 28px 0 0 83px; padding: 2px 0 0; border: 2px solid #a9a9a9; border-radius: 0; background: linear-gradient(#e4e4e4, #f6f6f6); color: #222; font: 28.5px Inter, sans-serif; }

/* map */
.map { position: relative; height: 429px; margin-top: 57px; overflow: hidden; background: #f0eee8; }
.tiles { display: block; font-family: "Noto Sans", sans-serif; }
.tiles path { vector-effect: non-scaling-stroke; }
.tiles ellipse { vector-effect: non-scaling-stroke; }
.town { fill: #dedede; }
.land { fill: #f0eee8; }
.wood { fill: #b4d0a2; }
.grass { fill: #d0e8b3; }
.golf { fill: #e0f5c6; }
.park { fill: #d0f6d2; }
.school { fill: #fffee4; }
.pitch { fill: #9edfc1; }
.track { fill: #9edfc1; stroke: #bdebd4; stroke-width: 3; }
.pink { fill: #f6d8d4; }
.gray { fill: #d0d0d0; }
.water { fill: #b4d3df; }
.river { fill: none; stroke: #b4d3df; }
.c-res, .f-res, .c-min, .f-min, .c-ter, .f-ter, .c-sec, .f-sec, .c-pri, .f-pri { fill: none; stroke-linejoin: round; stroke-linecap: round; }
.c-res { stroke: #cdccc9; stroke-width: 4.4; }
.f-res { stroke: #fff; stroke-width: 2.8; }
.c-min { stroke: #c9c8c5; stroke-width: 5.6; }
.f-min { stroke: #fff; stroke-width: 3.6; }
.c-ter { stroke: #acaba8; stroke-width: 8.4; }
.f-ter { stroke: #fff; stroke-width: 6; }
.c-sec { stroke: #b5b77a; stroke-width: 12; }
.f-sec { stroke: #f7fabf; stroke-width: 9; }
.c-sec.thin { stroke-width: 11; }
.f-sec.thin { stroke-width: 8.5; }
.c-pri { stroke: #b9955b; stroke-width: 12; }
.f-pri { stroke: #f6d4a2; stroke-width: 9; }
.motorway { fill: none; stroke: #dc92a0; stroke-width: 15; }
.boundary { fill: none; stroke: #b197b1; stroke-width: 2.2; stroke-dasharray: 9 3 2 3; }
.county { fill: none; stroke: #bfadbf; stroke-width: 4.5; }
.county-dash { fill: none; stroke: #efe9ef; stroke-width: 2; stroke-dasharray: 3 22; }
.trail { fill: none; stroke: #4a4ae0; stroke-width: 2.4; stroke-dasharray: 2.5 3.5; }
.halo-y, .halo-o { font-size: 16.5px; fill: #26240f; stroke: #f7fabf; stroke-width: 4; paint-order: stroke; stroke-linejoin: round; }
.halo-o { stroke: #f6d4a2; fill: #3a2a10; }
.place { font-size: 19px; font-style: italic; fill: #777; stroke: #e9e9e9; stroke-width: 3; paint-order: stroke; }
.creek { font-size: 18px; font-style: italic; fill: #6b93c2; stroke: #dbe8ef; stroke-width: 3; paint-order: stroke; }
.city { font-size: 21px; fill: #505050; stroke: #f2f2f2; stroke-width: 4; paint-order: stroke; }
.county-name { font-size: 19px; fill: #aa90ac; stroke: #f0eee8; stroke-width: 3; paint-order: stroke; }
.shield { font-size: 19px; font-weight: 500; }
.zoom { position: absolute; top: 20px; left: 20px; width: 68px; border: 4px solid rgba(0, 0, 0, 0.2); border-radius: 8px; }
.zoom a { display: block; height: 61px; padding-top: 6px; background: #fff; color: #000; text-align: center; font: 700 44px/55px "Liberation Mono", monospace; }
.zoom a:first-child { border-bottom: 2px solid #ccc; border-radius: 4px 4px 0 0; }
.zoom a:last-child { border-radius: 0 0 4px 4px; }

.comment-fab { position: absolute; top: 1130px; left: 3272px; width: 72px; height: 72px; border-radius: 50%; box-shadow: 0 14px 60px 6px rgba(55, 68, 66, 0.5); }
.comment-fab svg { display: block; }
```
